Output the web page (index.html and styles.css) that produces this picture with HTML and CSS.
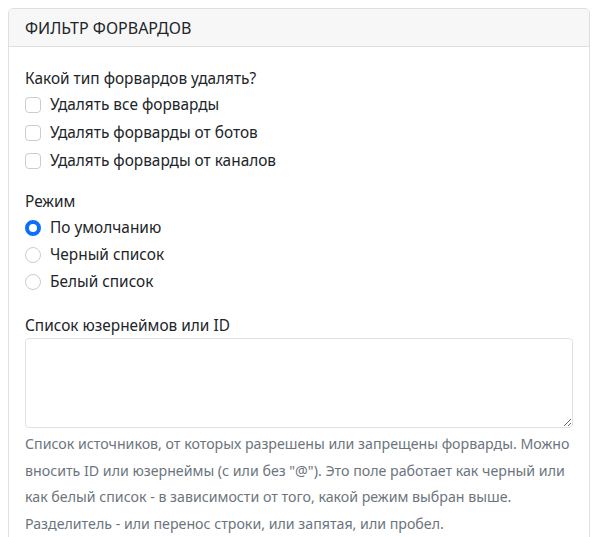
FILE: index.html
```html
<!DOCTYPE html>
<html lang="ru">
<head>
    <meta charset="UTF-8">
    <meta name="viewport" content="width=device-width, initial-scale=1.0">
    <title>Фильтр форвардов</title>
    <link rel="stylesheet" href="styles.css">
</head>
<body>
    <div class="card">
        <div class="card-header">ФИЛЬТР ФОРВАРДОВ</div>
        <div class="card-body">

            <div class="group">
                <div class="group-label">Какой тип форвардов удалять?</div>
                <label class="check-row">
                    <input type="checkbox" class="check">
                    <span>Удалять все форварды</span>
                </label>
                <label class="check-row">
                    <input type="checkbox" class="check">
                    <span>Удалять форварды от ботов</span>
                </label>
                <label class="check-row">
                    <input type="checkbox" class="check">
                    <span>Удалять форварды от каналов</span>
                </label>
            </div>

            <div class="group mode">
                <div class="group-label">Режим</div>
                <label class="radio-row">
                    <input type="radio" name="mode" class="radio" checked>
                    <span>По умолчанию</span>
                </label>
                <label class="radio-row">
                    <input type="radio" name="mode" class="radio">
                    <span>Черный список</span>
                </label>
                <label class="radio-row">
                    <input type="radio" name="mode" class="radio">
                    <span>Белый список</span>
                </label>
            </div>

            <div class="group list">
                <label class="group-label" for="sources">Список юзернеймов или ID</label>
                <textarea id="sources" class="sources"></textarea>
                <div class="help">Список источников, от которых разрешены или запрещены форварды. Можно вносить ID или юзернеймы (с или без "@"). Это поле работает как черный или как белый список - в зависимости от того, какой режим выбран выше. Разделитель - или перенос строки, или запятая, или пробел.</div>
            </div>

        </div>
    </div>
</body>
</html>
```

FILE: styles.css
```css
body{
    margin: 8px;
    font-family: 'Noto Sans', 'Open Sans', sans-serif;
    font-size: 15.4px;
    color: #212529;
    background-color: white;
}
.card{
    width: 580px;
    border: 1px solid #dfdfdf;
    border-radius: 5px;
    overflow: hidden;
}
.card-header{
    padding: 7px 16px 6px 16px;
    font-size: 16px;
    line-height: 24px;
    background-color: #f7f7f7;
    border-bottom: 1px solid #dfdfdf;
}
.card-body{
    padding: 20px 16px 16px 16px;
    display: flex;
    flex-direction: column;
}
.group{
    display: flex;
    flex-direction: column;
}
.group-label{
    display: block;
    line-height: 24px;
}
.check-row,
.radio-row{
    display: flex;
    align-items: center;
    gap: 9px;
    line-height: 24px;
}
.check-row{
    height: 28px;
}
.radio-row{
    height: 27px;
}
.mode{
    margin-top: 15px;
}
.list{
    margin-top: 19px;
}
.check,
.radio{
    appearance: none;
    -webkit-appearance: none;
    margin: 0;
    width: 16px;
    height: 16px;
    border: 1px solid #c9cdd1;
    background-color: white;
    flex-shrink: 0;
}
.check{
    border-radius: 4px;
}
.radio{
    border-radius: 50%;
}
.radio:checked{
    background-color: white;
    border: 4px solid #0d6efd;
}
.sources{
    display: block;
    box-sizing: border-box;
    width: 100%;
    height: 90px;
    margin: 0;
    border: 1px solid #dee2e6;
    border-radius: 4px;
    font-family: inherit;
    font-size: 16px;
}
.help{
    margin-top: 3px;
    font-size: 14.2px;
    line-height: 26.5px;
    color: #6c757d;
}
```
